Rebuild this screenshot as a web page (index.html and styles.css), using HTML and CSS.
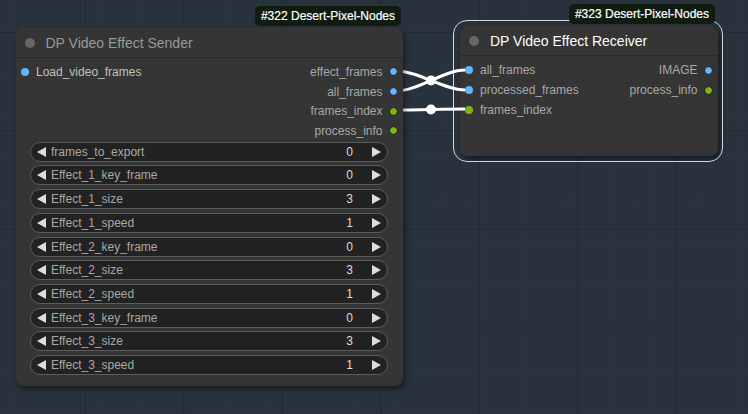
FILE: index.html
```html
<!DOCTYPE html>
<html>
<head>
<meta charset="utf-8">
<link rel="stylesheet" href="styles.css">
</head>
<body>
<div class="canvas">
  <div class="node receiver selected">
    <div class="badge">#323 Desert-Pixel-Nodes</div>
    <div class="title"><span class="tdot"></span><span class="ttext">DP Video Effect Receiver</span></div>
    <div class="slots">
      <div class="row"><div class="in"><span class="dot blue"></span>all_frames</div><div class="out">IMAGE<span class="dot blue"></span></div></div>
      <div class="row"><div class="in"><span class="dot blue"></span>processed_frames</div><div class="out">process_info<span class="dot green"></span></div></div>
      <div class="row"><div class="in"><span class="dot green"></span>frames_index</div></div>
    </div>
  </div>

  <svg class="links" width="748" height="414" viewBox="0 0 748 414">
    <path d="M396 71 C418 71 444 90 465 90" />
    <path d="M396 91 C418 91 444 70 465 70" />
    <path d="M396 110 C418 110 444 109 465 109" />
    <circle cx="431" cy="80.5" r="5" />
    <circle cx="431" cy="109.5" r="5" />
  </svg>

  <div class="node sender">
    <div class="badge">#322 Desert-Pixel-Nodes</div>
    <div class="title"><span class="tdot"></span><span class="ttext">DP Video Effect Sender</span></div>
    <div class="slots">
      <div class="row"><div class="in main"><span class="dot blue"></span>Load_video_frames</div><div class="out">effect_frames<span class="dot blue"></span></div></div>
      <div class="row"><div class="in"></div><div class="out">all_frames<span class="dot blue"></span></div></div>
      <div class="row"><div class="in"></div><div class="out">frames_index<span class="dot green"></span></div></div>
      <div class="row"><div class="in"></div><div class="out">process_info<span class="dot green"></span></div></div>
    </div>
    <div class="widgets">
      <div class="widget"><svg class="arr" width="9" height="10" viewBox="0 0 9 10"><polygon points="9,0 9,10 0,5"/></svg><span class="label">frames_to_export</span><span class="val">0</span><svg class="arr r" width="9" height="10" viewBox="0 0 9 10"><polygon points="0,0 0,10 9,5"/></svg></div>
      <div class="widget"><svg class="arr" width="9" height="10" viewBox="0 0 9 10"><polygon points="9,0 9,10 0,5"/></svg><span class="label">Effect_1_key_frame</span><span class="val">0</span><svg class="arr r" width="9" height="10" viewBox="0 0 9 10"><polygon points="0,0 0,10 9,5"/></svg></div>
      <div class="widget"><svg class="arr" width="9" height="10" viewBox="0 0 9 10"><polygon points="9,0 9,10 0,5"/></svg><span class="label">Effect_1_size</span><span class="val">3</span><svg class="arr r" width="9" height="10" viewBox="0 0 9 10"><polygon points="0,0 0,10 9,5"/></svg></div>
      <div class="widget"><svg class="arr" width="9" height="10" viewBox="0 0 9 10"><polygon points="9,0 9,10 0,5"/></svg><span class="label">Effect_1_speed</span><span class="val">1</span><svg class="arr r" width="9" height="10" viewBox="0 0 9 10"><polygon points="0,0 0,10 9,5"/></svg></div>
      <div class="widget"><svg class="arr" width="9" height="10" viewBox="0 0 9 10"><polygon points="9,0 9,10 0,5"/></svg><span class="label">Effect_2_key_frame</span><span class="val">0</span><svg class="arr r" width="9" height="10" viewBox="0 0 9 10"><polygon points="0,0 0,10 9,5"/></svg></div>
      <div class="widget"><svg class="arr" width="9" height="10" viewBox="0 0 9 10"><polygon points="9,0 9,10 0,5"/></svg><span class="label">Effect_2_size</span><span class="val">3</span><svg class="arr r" width="9" height="10" viewBox="0 0 9 10"><polygon points="0,0 0,10 9,5"/></svg></div>
      <div class="widget"><svg class="arr" width="9" height="10" viewBox="0 0 9 10"><polygon points="9,0 9,10 0,5"/></svg><span class="label">Effect_2_speed</span><span class="val">1</span><svg class="arr r" width="9" height="10" viewBox="0 0 9 10"><polygon points="0,0 0,10 9,5"/></svg></div>
      <div class="widget"><svg class="arr" width="9" height="10" viewBox="0 0 9 10"><polygon points="9,0 9,10 0,5"/></svg><span class="label">Effect_3_key_frame</span><span class="val">0</span><svg class="arr r" width="9" height="10" viewBox="0 0 9 10"><polygon points="0,0 0,10 9,5"/></svg></div>
      <div class="widget"><svg class="arr" width="9" height="10" viewBox="0 0 9 10"><polygon points="9,0 9,10 0,5"/></svg><span class="label">Effect_3_size</span><span class="val">3</span><svg class="arr r" width="9" height="10" viewBox="0 0 9 10"><polygon points="0,0 0,10 9,5"/></svg></div>
      <div class="widget"><svg class="arr" width="9" height="10" viewBox="0 0 9 10"><polygon points="9,0 9,10 0,5"/></svg><span class="label">Effect_3_speed</span><span class="val">1</span><svg class="arr r" width="9" height="10" viewBox="0 0 9 10"><polygon points="0,0 0,10 9,5"/></svg></div>
    </div>
  </div>
</div>
</body>
</html>
```
FILE: styles.css
```css
* { box-sizing: border-box; }
html, body { margin: 0; padding: 0; }
body {
  width: 748px;
  height: 414px;
  overflow: hidden;
  font-family: "Liberation Sans", Arial, sans-serif;
  background-color: #28333e;
  background-image:
    linear-gradient(#212b35 1px, transparent 1px),
    linear-gradient(90deg, #212b35 1px, transparent 1px),
    linear-gradient(#25303a 1px, transparent 1px),
    linear-gradient(90deg, #25303a 1px, transparent 1px);
  background-size: 98.5px 98.5px, 98.5px 98.5px, 9.85px 9.85px, 9.85px 9.85px;
  background-position: 85px 32px, 85px 32px, 6.2px 2.4px, 6.2px 2.4px;
}
.canvas { position: relative; width: 748px; height: 414px; }

.node {
  position: absolute;
  background: #353535;
  border-radius: 8px;
  box-shadow: 2px 3px 5px rgba(0, 0, 0, 0.45);
  display: flex;
  flex-direction: column;
}
.sender { left: 16px; top: 28px; width: 387px; height: 358px; z-index: 3; }
.receiver { left: 460px; top: 26px; width: 258px; height: 130px; z-index: 1; }
.selected::before {
  content: "";
  position: absolute;
  left: -7px; top: -6px; right: -5px; bottom: -6px;
  border: 1.5px solid #d6d6d6;
  border-radius: 14px;
  pointer-events: none;
}

.badge {
  position: absolute;
  right: 2px;
  bottom: calc(100% + 2px);
  height: 20px;
  padding: 0 6px;
  background: #0f1c0f;
  color: #fff;
  font-size: 12px;
  line-height: 20px;
  border-radius: 5px;
  white-space: nowrap;
  z-index: 2;
  -webkit-text-stroke: 0.2px #fff;
}
.receiver .badge { right: 3px; bottom: calc(100% + 2.5px); }

.title {
  height: 30px;
  flex: none;
  display: flex;
  align-items: center;
  padding-left: 9px;
  border-bottom: 1px solid #2a2a2a;
}
.tdot {
  width: 10px; height: 10px;
  border-radius: 50%;
  background: #666;
  flex: none;
}
.ttext {
  margin-left: 10.5px;
  font-size: 14px;
  color: #999;
  white-space: nowrap;
}
.receiver .ttext { color: #fff; margin-left: 11px; }

.slots { padding-top: 4px; display: flex; flex-direction: column; }
.row {
  height: 20px;
  display: flex;
  align-items: center;
  justify-content: space-between;
  font-size: 12px;
  color: #a8a8a8;
}
.sender .row { height: 19.7px; }
.in { display: flex; align-items: center; padding-left: 5px; }
.in.main { color: #c0c0c0; }
.in .dot { margin-right: 7px; }
.out { display: flex; align-items: center; padding-right: 5.5px; margin-left: auto; }
.out .dot { margin-left: 6px; border: 1px solid #161616; width: 9px; height: 9px; }
.dot {
  display: inline-block;
  width: 8px; height: 8px;
  border-radius: 50%;
  flex: none;
}
.dot.blue { background: #64b5f6; }
.dot.green { background: #7cb518; }

.widgets {
  margin-top: 1px;
  padding: 0 15px 0 14px;
  display: flex;
  flex-direction: column;
  gap: 3.7px;
}
.widget {
  height: 20px;
  background: #222;
  border: 1px solid #5c5c5c;
  border-radius: 10px;
  display: flex;
  align-items: center;
  padding: 0 6px 0 6px;
  font-size: 12px;
}
.arr { flex: none; fill: #ddd; }
.label { margin-left: 5px; flex: 1; color: #a8a8a8; white-space: nowrap; }
.val { color: #ddd; }
.arr.r { margin-left: 19px; }

.links {
  position: absolute;
  left: 0; top: 0;
  z-index: 2;
  pointer-events: none;
}
.links path { fill: none; stroke: #fff; stroke-width: 3; }
.links circle { fill: #fff; }
```
